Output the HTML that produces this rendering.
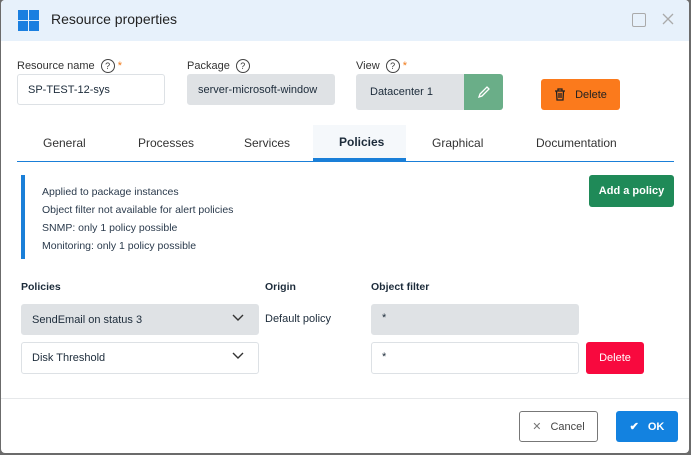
<!DOCTYPE html><html><head><style>
body{margin:0;width:691px;height:455px;background:#6b6b6b;font-family:"Liberation Sans",sans-serif;position:relative;overflow:hidden;color:#1c2b3a}
.a{position:absolute}
.d{position:absolute;left:1px;top:0;width:688px;height:453px;background:#fff;border-radius:4px;overflow:hidden}
.lbl{font-size:11px;color:#333}
.q{display:inline-block;width:12px;height:12px;border:1.3px solid #444;border-radius:50%;font-size:9px;text-align:center;line-height:12px;margin-left:6px;vertical-align:middle}
.in{position:absolute;border:1px solid #dde1e5;border-radius:3px;font-size:11px;box-sizing:border-box;padding-left:10px;display:flex;align-items:center}
.g{background:#dfe2e5;border-color:#dfe2e5}
.tab{position:absolute;top:136px;font-size:12px;color:#333}
.btn{position:absolute;border-radius:3px;color:#fff;font-size:11px;display:flex;align-items:center;justify-content:center;box-sizing:border-box}
.chev{position:absolute;right:14px;top:9px}
</style></head><body>
<div class="d">
<div class="a" style="left:0;top:0;width:688px;height:41px;background:#e7f1fb"></div>
<svg class="a" style="left:17px;top:10px" width="21" height="21"><rect x="0" y="0" width="10" height="10" fill="#1a7fe0"/><rect x="11" y="0" width="10" height="10" fill="#1a7fe0"/><rect x="0" y="11" width="10" height="10" fill="#1a7fe0"/><rect x="11" y="11" width="10" height="10" fill="#1a7fe0"/></svg>
<div class="a" style="left:50px;top:11px;font-size:14px;color:#222">Resource properties</div>
<div class="a" style="left:631px;top:13px;width:12px;height:12px;border:1.3px solid #aaa;border-radius:2px"></div>
<svg class="a" style="left:661px;top:13px" width="12" height="12"><path d="M1 1L11 11M11 1L1 11" stroke="#aaa" stroke-width="1.3"/></svg>
<div class="a lbl" style="left:16px;top:59px">Resource name<span class="q">?</span> <span style="color:#f07a1a">*</span></div>
<div class="a lbl" style="left:186px;top:59px">Package<span class="q">?</span></div>
<div class="a lbl" style="left:355px;top:59px">View<span class="q">?</span> <span style="color:#f07a1a">*</span></div>
<div class="in" style="left:16px;top:74px;width:148px;height:31px">SP-TEST-12-sys</div>
<div class="in g" style="left:186px;top:74px;width:148px;height:31px">server-microsoft-window</div>
<div class="in g" style="left:355px;top:74px;width:110px;height:36px;padding-left:13px">Datacenter 1</div>
<div class="btn" style="left:463px;top:74px;width:39px;height:36px;background:#6aae88;border-radius:0 3px 3px 0"><svg width="14" height="14"><path d="M2 12L3 9L10 2L12 4L5 11Z" fill="none" stroke="#fff" stroke-width="1.3"/></svg></div>
<div class="btn" style="left:540px;top:79px;width:79px;height:31px;background:#fb7a1c;color:#222"><svg width="12" height="13" style="margin-right:9px"><path d="M1 3H11M4 3V1H8V3M2.5 3L3 12H9L9.5 3M5 5V10M7 5V10" fill="none" stroke="#222" stroke-width="1.3"/></svg>Delete</div>
<div class="a" style="left:312px;top:125px;width:93px;height:35px;background:#f5f8fb"></div>
<div class="a" style="left:312px;top:158px;width:93px;height:3px;background:#1a7fd8"></div>
<div class="a" style="left:16px;top:161px;width:657px;height:1px;background:#1a7fd8"></div>
<div class="tab" style="left:42px">General</div>
<div class="tab" style="left:137px">Processes</div>
<div class="tab" style="left:243px">Services</div>
<div class="tab" style="left:338px;top:135px;font-weight:bold;color:#1c2b3a">Policies</div>
<div class="tab" style="left:431px">Graphical</div>
<div class="tab" style="left:535px">Documentation</div>
<div class="a" style="left:20px;top:175px;width:4px;height:84px;background:#1a7fd8"></div>
<div class="a" style="left:41px;top:183px;font-size:10.5px;line-height:18px;color:#2a3a4c">Applied to package instances<br>Object filter not available for alert policies<br>SNMP: only 1 policy possible<br>Monitoring: only 1 policy possible</div>
<div class="btn" style="left:588px;top:175px;width:85px;height:32px;background:#1f8a58;font-weight:bold">Add a policy</div>
<div class="a" style="left:20px;top:281px;font-size:10.5px;font-weight:bold">Policies</div>
<div class="a" style="left:264px;top:281px;font-size:10.5px;font-weight:bold">Origin</div>
<div class="a" style="left:370px;top:281px;font-size:10.5px;font-weight:bold">Object filter</div>
<div class="in g" style="left:20px;top:304px;width:238px;height:31px">SendEmail on status 3<svg class="chev" width="12" height="8"><path d="M1 1L6 6L11 1" fill="none" stroke="#333" stroke-width="1.4"/></svg></div>
<div class="a" style="left:264px;top:313px;font-size:11px">Default policy</div>
<div class="in g" style="left:370px;top:304px;width:208px;height:31px;align-items:flex-start;padding-top:7px">*</div>
<div class="in" style="left:20px;top:342px;width:238px;height:32px">Disk Threshold<svg class="chev" width="12" height="8"><path d="M1 1L6 6L11 1" fill="none" stroke="#333" stroke-width="1.4"/></svg></div>
<div class="in" style="left:370px;top:342px;width:208px;height:32px;align-items:flex-start;padding-top:8px">*</div>
<div class="btn" style="left:585px;top:342px;width:58px;height:32px;background:#f8093e">Delete</div>
<div class="a" style="left:0;top:398px;width:688px;height:1px;background:#e6e8ea"></div>
<div class="btn" style="left:518px;top:411px;width:79px;height:31px;border:1px solid #777;color:#444;background:#fff"><span style="margin-right:9px;color:#777">✕</span>Cancel</div>
<div class="btn" style="left:615px;top:411px;width:62px;height:31px;background:#1382e0;font-weight:bold"><span style="margin-right:9px">✔</span>OK</div>
</div>
</body></html>
